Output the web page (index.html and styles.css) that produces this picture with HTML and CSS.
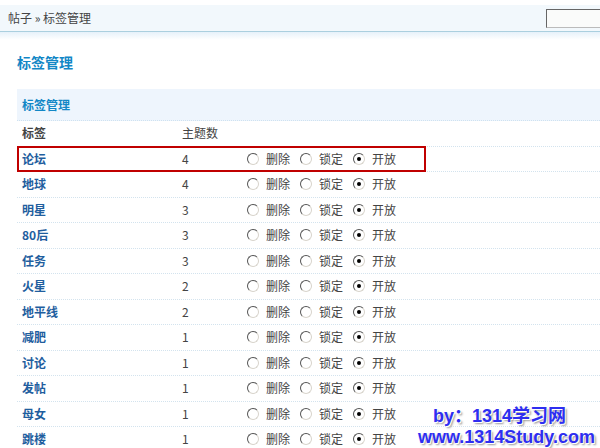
FILE: index.html
```html
<!DOCTYPE html>
<html lang="zh-CN">
<head>
  <meta charset="UTF-8" />
  <title>标签管理</title>
  <link rel="stylesheet" href="styles.css">
</head>
<body>

  <div class="topbar">
    <span class="crumbs">帖子 &raquo; 标签管理</span>
    <input class="search" type="text">
  </div>
  <div class="shade"></div>

  <div class="main">
    <h2>标签管理</h2>

    <div class="box">
      <div class="box-title">标签管理</div>

      <div class="row head">
        <span class="tag">标签</span>
        <span class="count">主题数</span>
      </div>

      <div class="row">
        <span class="tag">论坛</span><span class="count">4</span>
        <span class="opts"><i class="radio"></i><em>删除</em><i class="radio"></i><em>锁定</em><i class="radio on"></i><em>开放</em></span>
        <div class="mark"></div>
      </div>
      <div class="row">
        <span class="tag">地球</span><span class="count">4</span>
        <span class="opts"><i class="radio"></i><em>删除</em><i class="radio"></i><em>锁定</em><i class="radio on"></i><em>开放</em></span>
      </div>
      <div class="row">
        <span class="tag">明星</span><span class="count">3</span>
        <span class="opts"><i class="radio"></i><em>删除</em><i class="radio"></i><em>锁定</em><i class="radio on"></i><em>开放</em></span>
      </div>
      <div class="row">
        <span class="tag">80后</span><span class="count">3</span>
        <span class="opts"><i class="radio"></i><em>删除</em><i class="radio"></i><em>锁定</em><i class="radio on"></i><em>开放</em></span>
      </div>
      <div class="row">
        <span class="tag">任务</span><span class="count">3</span>
        <span class="opts"><i class="radio"></i><em>删除</em><i class="radio"></i><em>锁定</em><i class="radio on"></i><em>开放</em></span>
      </div>
      <div class="row">
        <span class="tag">火星</span><span class="count">2</span>
        <span class="opts"><i class="radio"></i><em>删除</em><i class="radio"></i><em>锁定</em><i class="radio on"></i><em>开放</em></span>
      </div>
      <div class="row">
        <span class="tag">地平线</span><span class="count">2</span>
        <span class="opts"><i class="radio"></i><em>删除</em><i class="radio"></i><em>锁定</em><i class="radio on"></i><em>开放</em></span>
      </div>
      <div class="row">
        <span class="tag">减肥</span><span class="count">1</span>
        <span class="opts"><i class="radio"></i><em>删除</em><i class="radio"></i><em>锁定</em><i class="radio on"></i><em>开放</em></span>
      </div>
      <div class="row">
        <span class="tag">讨论</span><span class="count">1</span>
        <span class="opts"><i class="radio"></i><em>删除</em><i class="radio"></i><em>锁定</em><i class="radio on"></i><em>开放</em></span>
      </div>
      <div class="row">
        <span class="tag">发帖</span><span class="count">1</span>
        <span class="opts"><i class="radio"></i><em>删除</em><i class="radio"></i><em>锁定</em><i class="radio on"></i><em>开放</em></span>
      </div>
      <div class="row">
        <span class="tag">母女</span><span class="count">1</span>
        <span class="opts"><i class="radio"></i><em>删除</em><i class="radio"></i><em>锁定</em><i class="radio on"></i><em>开放</em></span>
      </div>
      <div class="row">
        <span class="tag">跳楼</span><span class="count">1</span>
        <span class="opts"><i class="radio"></i><em>删除</em><i class="radio"></i><em>锁定</em><i class="radio on"></i><em>开放</em></span>
      </div>
    </div>
  </div>

  <div class="watermark">
    <div class="wm1">by：1314学习网</div>
    <div class="wm2">www.1314Study.com</div>
  </div>

</body>
</html>
```

FILE: styles.css
```css
html, body {
  height: 100%;
}

body {
  margin: 0;
  font-family: "Noto Sans CJK SC", "Liberation Sans", sans-serif;
  font-size: 12px;
  color: #444;
  background: #fff;
  overflow: hidden;
  position: relative;
}

.topbar {
  margin-top: 5px;
  height: 26px;
  background: #f2f8fc;
  border-bottom: 1px solid #aacfdf;
  display: flex;
  align-items: center;
  justify-content: space-between;
  padding-left: 8px;
  overflow: hidden;
}

.crumbs {
  color: #444;
  line-height: 26px;
}

.search {
  width: 64px;
  height: 15px;
  margin: 0 -16px 0 0;
  padding: 1px 2px;
  border: 1px solid;
  border-color: #666 #ccc #bbb #666;
  background: #fafbfa;
}

.shade {
  height: 8px;
  background: linear-gradient(#e6f1fa, #fff);
}

.main {
  padding-left: 17px;
}

h2 {
  margin: 12px 0 0;
  font-size: 14px;
  line-height: 20px;
  font-weight: bold;
  color: #1287c6;
}

.box {
  margin-top: 17px;
}

.box-title {
  height: 31px;
  line-height: 31px;
  padding-left: 5px;
  background: #eef5fd;
  border-bottom: 1px dotted #cfe2f0;
  font-weight: bold;
  color: #1287c6;
}

.row {
  position: relative;
  height: 24.5px;
  line-height: 24.5px;
  border-bottom: 1px dotted #d3e3ee;
  padding-left: 5px;
  display: flex;
  align-items: center;
}

.tag {
  width: 160px;
  font-weight: bold;
  color: #1f5e9e;
}

.head .tag {
  color: #444;
}

.count {
  width: 65px;
}

.opts {
  display: flex;
  align-items: center;
}

.opts em {
  font-style: normal;
  margin: 0 10px 0 7px;
}

.radio {
  display: inline-block;
  width: 10px;
  height: 10px;
  border-radius: 50%;
  border: 1.5px solid;
  border-color: #555 #d8d4cc #d8d4cc #555;
  background: #fff;
  position: relative;
}

.radio.on::after {
  content: "";
  position: absolute;
  left: 3px;
  top: 3px;
  width: 4px;
  height: 4px;
  border-radius: 50%;
  background: #000;
}

.mark {
  position: absolute;
  left: 0;
  top: -1px;
  width: 405px;
  height: 22px;
  border: 2px solid #c00000;
}

.watermark {
  position: absolute;
  right: 5px;
  bottom: 0;
  font-family: "Liberation Sans", Arial, "Noto Sans CJK SC", sans-serif;
  font-weight: bold;
  font-size: 18px;
  line-height: 21px;
  color: #2e2ef0;
  text-shadow: 1px 1px 0 #fff, 2px 2px 2px #999;
  text-align: right;
}

.wm1 {
  margin-right: 29px;
}
```
